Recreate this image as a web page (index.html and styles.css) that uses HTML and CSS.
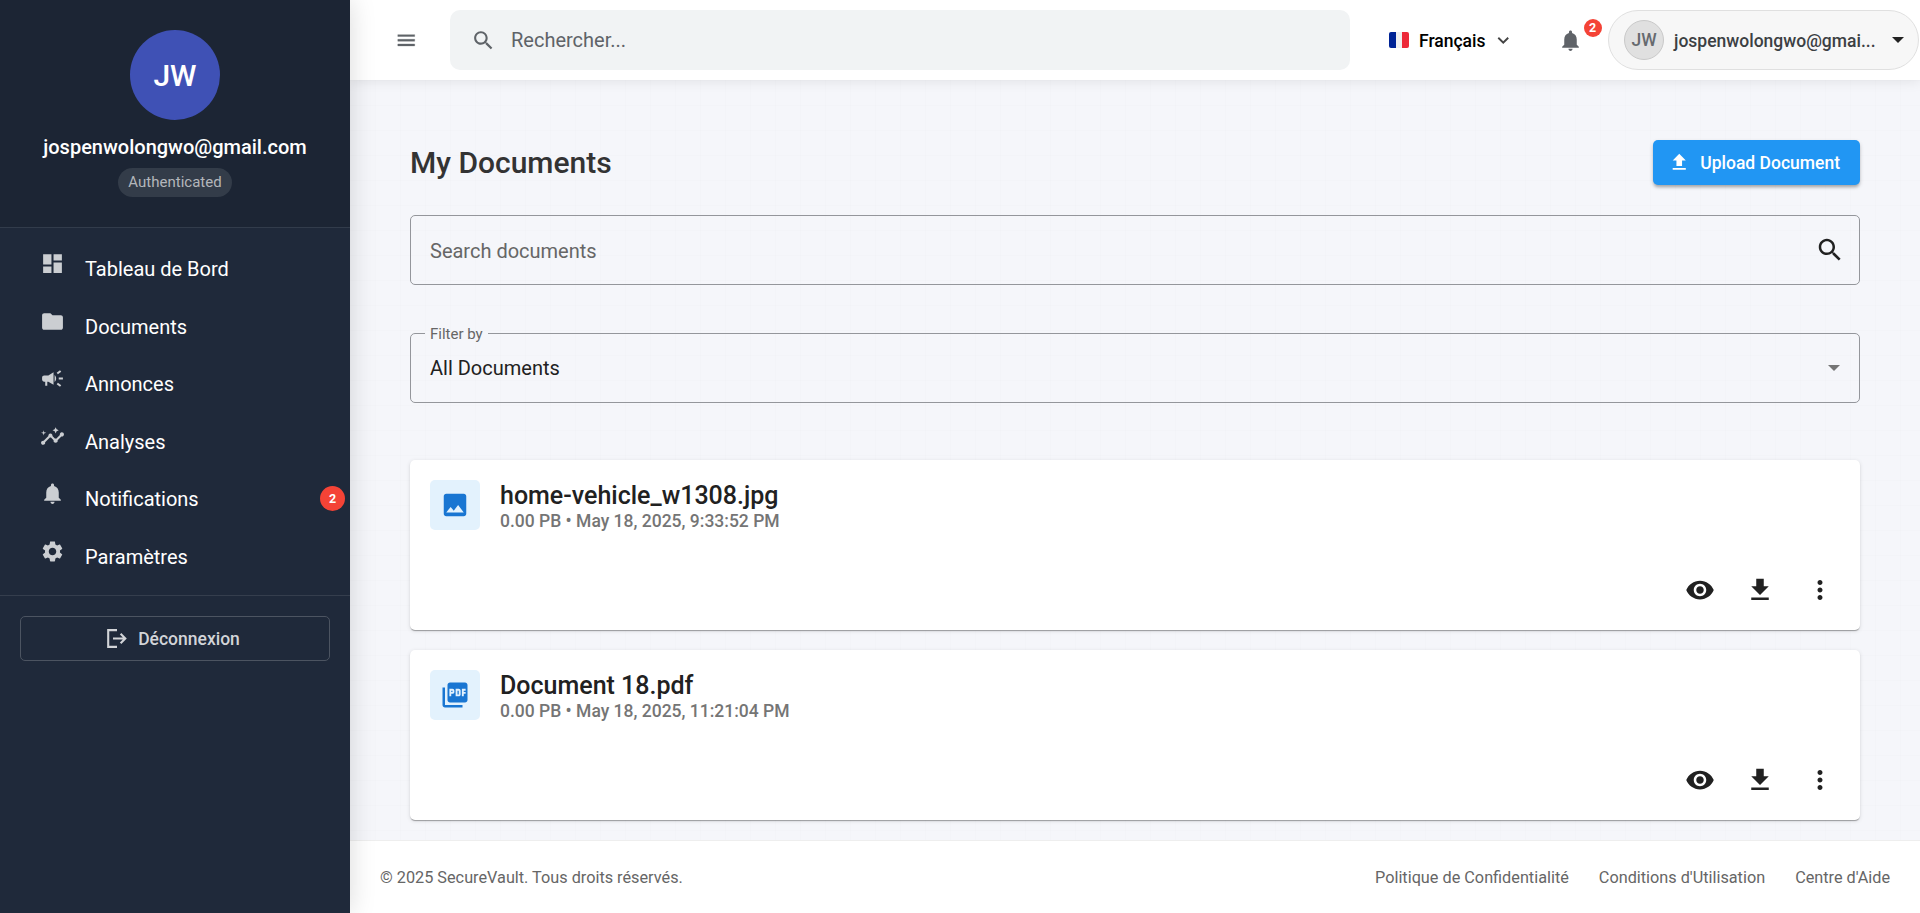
FILE: index.html
```html
<!DOCTYPE html>
<html lang="fr">
<head>
<meta charset="utf-8">
<title>SecureVault - My Documents</title>
<link rel="stylesheet" href="styles.css">
</head>
<body>
<svg class="defs" aria-hidden="true">
  <symbol id="i-dashboard" viewBox="0 0 24 24"><path d="M3 13h8V3H3v10zm0 8h8v-6H3v6zm10 0h8V11h-8v10zm0-18v6h8V3h-8z"/></symbol>
  <symbol id="i-folder" viewBox="0 0 24 24"><path d="M10 4H4c-1.1 0-1.99.9-1.99 2L2 18c0 1.1.9 2 2 2h16c1.1 0 2-.9 2-2V8c0-1.1-.9-2-2-2h-8l-2-2z"/></symbol>
  <symbol id="i-campaign" viewBox="0 0 24 24"><path d="M18 11v2h4v-2h-4zm-2 6.61c.96.71 2.21 1.65 3.2 2.39.4-.53.8-1.07 1.2-1.6-.99-.74-2.24-1.68-3.2-2.4-.4.54-.8 1.08-1.2 1.61zM20.4 5.6c-.4-.53-.8-1.07-1.2-1.6-.99.74-2.24 1.68-3.2 2.4.4.53.8 1.07 1.2 1.6.96-.72 2.21-1.65 3.2-2.4zM4 9c-1.1 0-2 .9-2 2v2c0 1.1.9 2 2 2h1v4h2v-4h1l5 3V6L8 9H4zm11.5 3c0-1.33-.58-2.53-1.5-3.35v6.69c.92-.81 1.5-2.01 1.5-3.34z"/></symbol>
  <symbol id="i-insights" viewBox="0 0 24 24"><path d="M21 8c-1.45 0-2.26 1.44-1.93 2.51l-3.55 3.56c-.3-.09-.74-.09-1.04 0l-2.55-2.55C12.27 10.45 11.46 9 10 9c-1.45 0-2.27 1.44-1.93 2.52l-4.56 4.55C2.44 15.74 1 16.55 1 18c0 1.1.9 2 2 2 1.45 0 2.26-1.44 1.93-2.51l4.55-4.56c.3.09.74.09 1.04 0l2.55 2.55C12.73 16.55 13.54 18 15 18c1.45 0 2.27-1.44 1.93-2.52l3.56-3.55c1.07.33 2.51-.48 2.51-1.93 0-1.1-.9-2-2-2zM15 9l.94-2.07L18 6l-2.06-.93L15 3l-.92 2.07L12 6l2.08.93zM3.5 11 4 9l2-.5L4 8l-.5-2L3 8l-2 .5L3 9z"/></symbol>
  <symbol id="i-bell" viewBox="0 0 24 24"><path d="M12 22c1.1 0 2-.9 2-2h-4c0 1.1.89 2 2 2zm6-6v-5c0-3.07-1.64-5.64-4.5-6.32V4c0-.83-.67-1.5-1.5-1.5s-1.5.67-1.5 1.5v.68C7.63 5.36 6 7.92 6 11v5l-2 2v1h16v-1l-2-2z"/></symbol>
  <symbol id="i-settings" viewBox="0 0 24 24"><path d="M19.14 12.94c.04-.3.06-.61.06-.94 0-.32-.02-.64-.07-.94l2.03-1.58c.18-.14.23-.41.12-.61l-1.92-3.32c-.12-.22-.37-.29-.59-.22l-2.39.96c-.5-.38-1.03-.7-1.62-.94l-.36-2.54c-.04-.24-.24-.41-.48-.41h-3.84c-.24 0-.43.17-.47.41l-.36 2.54c-.59.24-1.13.57-1.62.94l-2.39-.96c-.22-.08-.47 0-.59.22L2.74 8.87c-.12.21-.08.47.12.61l2.03 1.58c-.05.3-.09.63-.09.94s.02.64.07.94l-2.03 1.58c-.18.14-.23.41-.12.61l1.92 3.32c.12.22.37.29.59.22l2.39-.96c.5.38 1.03.7 1.62.94l.36 2.54c.05.24.24.41.48.41h3.84c.24 0 .44-.17.47-.41l.36-2.54c.59-.24 1.13-.56 1.62-.94l2.39.96c.22.08.47 0 .59-.22l1.92-3.32c.12-.22.07-.47-.12-.61l-2.01-1.58zM12 15.6c-1.98 0-3.6-1.62-3.6-3.6s1.62-3.6 3.6-3.6 3.6 1.62 3.6 3.6-1.62 3.6-3.6 3.6z"/></symbol>
  <symbol id="i-logout" viewBox="0 0 20 19"><path d="M10 1.1H1.2v16.8H10M6 9.5h12M13.6 4.8l4.7 4.7-4.7 4.7" fill="none" stroke="currentColor" stroke-width="2.1"/></symbol>
  <symbol id="i-menu" viewBox="0 0 24 24"><path d="M3 18h18v-2H3v2zm0-5h18v-2H3v2zm0-7v2h18V6H3z" stroke="currentColor" stroke-width=".35"/></symbol>
  <symbol id="i-search" viewBox="0 0 24 24"><path d="M15.5 14h-.79l-.28-.27C15.41 12.59 16 11.11 16 9.5 16 5.91 13.09 3 9.5 3S3 5.91 3 9.5 5.91 16 9.5 16c1.61 0 3.09-.59 4.23-1.57l.27.28v.79l5 4.99L20.49 19l-4.99-5zm-6 0C7.01 14 5 11.99 5 9.5S7.01 5 9.5 5 14 7.01 14 9.5 11.99 14 9.5 14z"/></symbol>
  <symbol id="i-chevron" viewBox="0 0 24 24"><path d="M7.41 8.59 12 13.17l4.59-4.58L18 10l-6 6-6-6 1.41-1.41z"/></symbol>
  <symbol id="i-upload" viewBox="0 0 24 24"><path d="M9 16h6v-6h4l-7-7-7 7h4zm-4 2h14v2H5z"/></symbol>
  <symbol id="i-image" viewBox="0 0 24 24"><path d="M21 19V5c0-1.1-.9-2-2-2H5c-1.1 0-2 .9-2 2v14c0 1.1.9 2 2 2h14c1.1 0 2-.9 2-2zM8.5 13.5l2.5 3.01L14.5 12l4.5 6H5l3.500-4.5z"/></symbol>
  <symbol id="i-pdf" viewBox="0 0 24 24"><path d="M20 2H8c-1.1 0-2 .9-2 2v12c0 1.1.9 2 2 2h12c1.1 0 2-.9 2-2V4c0-1.1-.9-2-2-2zm-8.500 7.500c0 .83-.67 1.500-1.500 1.500H9v2H7.500V7H10c.83 0 1.500.67 1.500 1.500v1zm5 2c0 .83-.67 1.500-1.500 1.500h-2.500V7H15c.83 0 1.500.67 1.500 1.500v3zm4-3H19v1h1.500V11H19v2h-1.500V7h3v1.500zM9 9.500h1v-1H9v1zM4 6H2v14c0 1.100.9 2 2 2h14v-2H4V6zm10 5.500h1v-3h-1v3z"/></symbol>
  <symbol id="i-eye" viewBox="0 0 24 24"><path d="M12 4.500C7 4.500 2.730 7.610 1 12c1.730 4.390 6 7.500 11 7.500s9.270-3.110 11-7.500c-1.730-4.390-6-7.500-11-7.500zM12 17c-2.760 0-5-2.240-5-5s2.240-5 5-5 5 2.240 5 5-2.240 5-5 5zm0-8c-1.660 0-3 1.340-3 3s1.340 3 3 3 3-1.340 3-3-1.340-3-3-3z"/></symbol>
  <symbol id="i-download" viewBox="0 0 24 24"><path d="M19 9h-4V3H9v6H5l7 7 7-7zM5 18v2h14v-2H5z"/></symbol>
  <symbol id="i-more" viewBox="0 0 24 24"><path d="M12 8c1.100 0 2-.9 2-2s-.9-2-2-2-2 .9-2 2 .9 2 2 2zm0 2c-1.100 0-2 .9-2 2s.9 2 2 2 2-.9 2-2-.9-2-2-2zm0 6c-1.100 0-2 .9-2 2s.9 2 2 2 2-.9 2-2-.9-2-2-2z"/></symbol>
</svg>

<div class="app">
  <aside class="sidebar">
    <div class="profile">
      <div class="profile-avatar">JW</div>
      <div class="profile-name">jospenwolongwo@gmail.com</div>
      <div class="profile-role">Authenticated</div>
    </div>
    <nav class="nav">
      <a class="nav-item"><svg class="nav-icon"><use href="#i-dashboard"/></svg><span>Tableau de Bord</span></a>
      <a class="nav-item"><svg class="nav-icon"><use href="#i-folder"/></svg><span>Documents</span></a>
      <a class="nav-item"><svg class="nav-icon"><use href="#i-campaign"/></svg><span>Annonces</span></a>
      <a class="nav-item"><svg class="nav-icon"><use href="#i-insights"/></svg><span>Analyses</span></a>
      <a class="nav-item"><svg class="nav-icon"><use href="#i-bell"/></svg><span>Notifications</span><b class="nav-badge">2</b></a>
      <a class="nav-item"><svg class="nav-icon"><use href="#i-settings"/></svg><span>Paramètres</span></a>
    </nav>
    <div class="sidebar-footer">
      <button class="logout"><svg class="logout-icon"><use href="#i-logout"/></svg>Déconnexion</button>
    </div>
  </aside>

  <div class="page">
    <header class="topbar">
      <svg class="menu-icon"><use href="#i-menu"/></svg>
      <div class="topsearch"><svg class="topsearch-icon"><use href="#i-search"/></svg><span>Rechercher...</span></div>
      <div class="lang">
        <span class="flag"><i class="flag-blue"></i><i class="flag-white"></i><i class="flag-red"></i></span>
        <span class="lang-name">Français</span>
        <svg class="lang-chevron"><use href="#i-chevron"/></svg>
      </div>
      <div class="alerts"><svg class="alerts-icon"><use href="#i-bell"/></svg><b class="alerts-badge">2</b></div>
      <div class="account">
        <span class="account-avatar">JW</span>
        <span class="account-name">jospenwolongwo@gmai...</span>
        <svg class="account-caret" viewBox="0 0 12 6"><path d="M0 0h12L6 6z"/></svg>
      </div>
    </header>

    <main class="content">
      <div class="content-head">
        <h1 class="title">My Documents</h1>
        <button class="upload"><svg class="upload-icon"><use href="#i-upload"/></svg>Upload Document</button>
      </div>
      <div class="field field-search"><span class="placeholder">Search documents</span><svg class="field-icon"><use href="#i-search"/></svg></div>
      <fieldset class="field field-filter">
        <legend class="field-label">Filter by</legend>
        <div class="field-row"><span>All Documents</span><svg class="field-caret" viewBox="0 0 12 6"><path d="M0 0h12L6 6z"/></svg></div>
      </fieldset>
      <div class="cards">
        <article class="card">
          <div class="card-head">
            <div class="card-thumb"><svg class="card-type"><use href="#i-image"/></svg></div>
            <div><div class="card-title">home-vehicle_w1308.jpg</div><div class="card-meta">0.00 PB • May 18, 2025, 9:33:52 PM</div></div>
          </div>
          <div class="card-actions"><svg class="action"><use href="#i-eye"/></svg><svg class="action"><use href="#i-download"/></svg><svg class="action"><use href="#i-more"/></svg></div>
        </article>
        <article class="card">
          <div class="card-head">
            <div class="card-thumb"><svg class="card-type"><use href="#i-pdf"/></svg></div>
            <div><div class="card-title">Document 18.pdf</div><div class="card-meta">0.00 PB • May 18, 2025, 11:21:04 PM</div></div>
          </div>
          <div class="card-actions"><svg class="action"><use href="#i-eye"/></svg><svg class="action"><use href="#i-download"/></svg><svg class="action"><use href="#i-more"/></svg></div>
        </article>
      </div>
    </main>

    <footer class="footer">
      <span>© 2025 SecureVault. Tous droits réservés.</span>
      <div class="footer-links"><a>Politique de Confidentialité</a><a>Conditions d'Utilisation</a><a>Centre d'Aide</a></div>
    </footer>
  </div>
</div>
</body>
</html>
```

FILE: styles.css
```css
* { box-sizing: border-box; }
body { margin: 0; font-family: Roboto, "Liberation Sans", sans-serif; font-size: 20px; color: #212121; overflow: hidden; }
svg { display: block; flex: none; fill: currentColor; }
button { font: inherit; margin: 0; }
.defs { position: absolute; width: 0; height: 0; }
.app { display: flex; width: 100%; height: 913px; }

/* Sidebar */
.sidebar { position: relative; z-index: 2; flex: none; width: 350px; background: #1f293a; color: #fff; box-shadow: 0 0 25px rgba(0, 0, 0, .15); }
.profile { display: flex; flex-direction: column; align-items: center; height: 228px; padding-top: 30px; background: #1c2534; border-bottom: 1px solid #323c4b; }
.profile-avatar { display: flex; align-items: center; justify-content: center; width: 90px; height: 90px; border-radius: 50%; background: #3f51b5; font-size: 30px; font-weight: 500; }
.profile-name { margin-top: 15px; line-height: 24px; font-weight: 500; }
.profile-role { margin-top: 9px; height: 29px; line-height: 28px; padding: 0 10px; border-radius: 15px; background: #333c49; color: #b3b6bb; font-size: 15px; }
.nav { height: 368px; padding-top: 12px; border-bottom: 1px solid #353e4d; }
.nav-item { display: flex; align-items: center; height: 57.5px; padding: 0 5px 0 40px; }
.nav-item span { padding-top: 1px; }
.nav-icon { width: 25px; height: 25px; margin: -10px 20px 0 0; color: #cbced2; }
.nav-badge { display: flex; align-items: center; justify-content: center; width: 25px; height: 25px; margin-left: auto; border-radius: 50%; background: #f44336; font-size: 12.5px; }
.sidebar-footer { padding: 20px; }
.logout { display: flex; align-items: center; justify-content: center; gap: 11px; width: 100%; height: 45px; padding: 0 9px 0 6px; border: 1px solid #4c5461; border-radius: 5px; background: none; color: #d2d4d8; font-size: 17.5px; font-weight: 500; }
.logout-icon { width: 20px; height: 19px; }

/* Top bar */
.page { flex: 1; display: flex; flex-direction: column; min-width: 0; background: #f5f6fa; }
.topbar { position: relative; z-index: 1; flex: none; display: flex; align-items: center; height: 80px; padding: 0 1px 0 45px; background: #fff; color: #5f6368; box-shadow: 0 2px 12px rgba(0, 0, 0, .08); }
.menu-icon { width: 22.5px; height: 22.5px; margin-right: 32.5px; }
.topsearch { flex: none; display: flex; align-items: center; gap: 15px; width: 900px; height: 60px; padding-left: 21px; border-radius: 10px; background: #f1f3f4; color: #5f6368; }
.topsearch-icon { width: 25px; height: 25px; }
.lang { display: flex; align-items: center; margin-left: 39px; color: #000; font-size: 17.5px; font-weight: 500; }
.lang-name { padding-top: 1px; }
.flag { display: flex; width: 20px; height: 16px; margin-right: 10px; border-radius: 2px; overflow: hidden; }
.flag i { flex: 1; }
.flag-blue { background: #002395; }
.flag-white { background: #f0f0f0; }
.flag-red { background: #ed2939; }
.lang-chevron { width: 22.5px; height: 22.5px; margin-left: 6px; color: #444; }
.alerts { position: relative; margin-left: 43.5px; }
.alerts-icon { width: 25px; height: 25px; }
.alerts-badge { position: absolute; left: 26px; top: -9px; width: 18px; height: 18px; border-radius: 50%; background: #f44336; color: #fff; font-size: 12.5px; line-height: 18px; text-align: center; }
.account { display: flex; align-items: center; width: 311px; height: 60px; margin-left: auto; padding: 0 14px 0 15px; border: 1px solid #e0e0e0; border-radius: 30px; background: #f7f7f7; }
.account-avatar { flex: none; display: flex; align-items: center; justify-content: center; width: 40px; height: 40px; margin-right: 10px; border: 1px solid #c9c9c9; border-radius: 50%; background: #e0e0e0; color: #666a6f; font-size: 17.5px; font-weight: 500; }
.account-name { width: 202px; padding-top: 1px; white-space: nowrap; color: #3c4043; font-size: 17.5px; font-weight: 500; }
.account-caret { width: 12px; height: 6px; margin-left: auto; color: #222; }

/* Documents */
.content { flex: 1; padding: 60px 60px 20px; color: #212121; background-image: linear-gradient(90deg, rgba(0, 0, 0, .006) 1px, transparent 1px), linear-gradient(rgba(0, 0, 0, .006) 1px, transparent 1px); background-size: 25px 25px; }
.content-head { display: flex; align-items: center; justify-content: space-between; height: 45px; }
.title { margin: 0; color: #333; font-size: 30px; font-weight: 500; }
.upload { display: flex; align-items: center; height: 45px; padding: 0 20px 0 15px; border: 0; border-radius: 5px; background: #2196f3; color: #fff; font-size: 17.5px; font-weight: 500; box-shadow: 0 3px 3px -1px rgba(0, 0, 0, .2), 0 2px 4px rgba(0, 0, 0, .18); }
.upload-icon { width: 22.5px; height: 22.5px; margin-right: 10px; }
.field { height: 70px; border: 1px solid #94969b; border-radius: 5px; }
.field-search { display: flex; align-items: center; justify-content: space-between; margin-top: 30px; padding: 0 14px 0 19px; }
.placeholder { padding-top: 2px; color: #666; }
.field-icon { width: 30px; height: 30px; }
.field-filter { min-width: 0; height: 79px; margin: 39px 0 0; padding: 0 19px 0 14px; }
.field-label { height: 18px; padding: 0 5px; color: #666; font-size: 15px; line-height: 20px; }
.field-row { display: flex; align-items: center; justify-content: space-between; height: 52px; padding-left: 5px; }
.field-caret { width: 12px; height: 6px; color: #757575; }
.cards { display: flex; flex-direction: column; gap: 20px; margin-top: 57px; }
.card { display: flex; flex-direction: column; justify-content: space-between; height: 170px; padding: 20px 25px 25px 20px; border-radius: 5px; background: #fff; box-shadow: 0 2px 1px -1px rgba(0, 0, 0, .2), 0 1px 1px rgba(0, 0, 0, .14), 0 1px 4px rgba(0, 0, 0, .12); }
.card-head { display: flex; gap: 20px; }
.card-thumb { display: flex; align-items: center; justify-content: center; width: 50px; height: 50px; border-radius: 5px; background: #e3f2fd; color: #1976d2; }
.card-type { width: 30px; height: 30px; }
.card-title { font-size: 25px; font-weight: 500; line-height: 31px; }
.card-meta { color: #757575; font-size: 17.5px; font-weight: 500; line-height: 20px; }
.card-actions { display: flex; justify-content: flex-end; gap: 30px; }
.action { width: 30px; height: 30px; }

/* Footer */
.footer { position: relative; flex: none; display: flex; align-items: center; justify-content: space-between; height: 73px; padding: 0 30px; border-top: 1px solid #eee; background: #fff; color: #666; font-size: 16.25px; }
.footer-links { display: flex; gap: 30px; }
```
